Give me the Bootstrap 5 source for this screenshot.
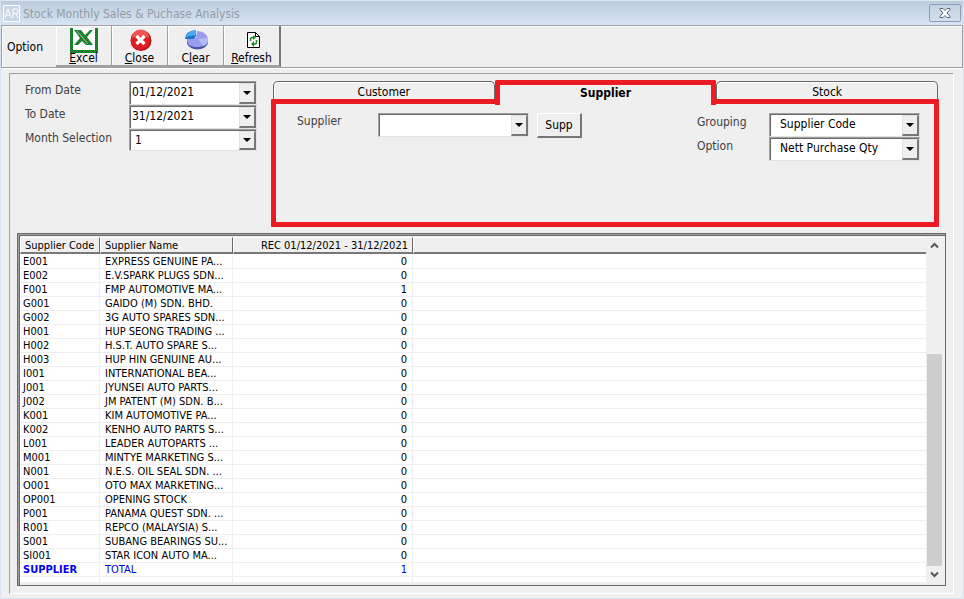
<!DOCTYPE html>
<html lang="en">
<head>
<meta charset="utf-8">
<meta name="viewport" content="width=device-width, initial-scale=1">
<title>Stock Monthly Sales &amp; Puchase Analysis</title>
<link href="https://cdn.jsdelivr.net/npm/bootstrap@5.3.0/dist/css/bootstrap.min.css" rel="stylesheet">
<style>
body{font-family:"DejaVu Sans Condensed","DejaVu Sans",Tahoma,sans-serif;font-size:12px;line-height:16px;color:#000;background:#d9e4f1}
button,input,select{font:inherit;color:inherit}
.app-window{min-height:100vh;border:solid #d9e4f1;border-width:0 1px 1px}
.title-bar{height:25px;background:linear-gradient(#bccbdc,#d8e4f2);color:#929ba6;border-top:1px solid #dfe7f0;padding:0 2px}
.title-text{margin-left:3px;padding-top:2px}
.app-logo{width:17px;height:17px}
.close-box{width:32px;height:18px;border:1px solid #8f9cb9;border-radius:2px;background:linear-gradient(#c3d2e4,#d3dfec)}
.client-area{background:#efefef}
.tool-bar{height:43px;border:1px solid #a0a0a0;box-shadow:inset 1px 1px #fff,0 1px #fff}
.tool-label{width:54px;padding-left:5px}
.tool-btn{width:56px;height:41px;border:1px solid #a0a0a0;border-width:0 1px 2px 0;box-shadow:inset 1px 1px #fff;background:#efefef;line-height:14px;padding:1px 0 0}
.tool-btn:last-child{width:57px;border-right:2px solid #787878}
.tool-btn svg{width:28px;height:26px;flex:none;margin-bottom:-2px}
.etched{margin:5px 9px 4px 8px;border:1px solid #a0a0a0;border-right-color:#fff;border-bottom-color:#fff}
.filters{width:261px;padding:7px 14px 0 15px}
.field-row{height:24px}
.field-row label{color:#404040;margin-top:1px}
.combo{position:relative;height:24px;background:#fff;border:1px solid #a0a0a0;border-right-color:#e3e3e3;border-bottom-color:#e3e3e3;box-shadow:inset 1px 1px #696969;padding:2px 1px 1px 2px}
.combo-date{width:128px}
.combo-wide{width:151px}
.combo-short{height:22px}
.combo input,.combo select{width:100%;min-width:0;border:0;background:none;appearance:none;outline:0;padding:0 18px 2px 0}
.combo select{padding-left:3px}
.combo .indent{padding-left:8px}
.drop{position:absolute;right:0;top:1px;bottom:0;width:17px;padding:0;background:#efefef;border:1px solid #e3e3e3;border-right:2px solid #777;border-bottom:2px solid #777;pointer-events:none}
.drop::after{content:"";border:4px solid transparent;border-top-color:#000;border-bottom:0}
.tabs-col{padding:6px 14px 0 0}
.tab-strip{height:25px;padding:0 1px 0 2px}
.tab-item{flex:1 1 33%;height:18px;margin-top:1px;border:1px solid #696969;border-bottom:0;border-radius:5px 5px 0 0;background:#efefef;box-shadow:inset 1px 1px #fff;padding:2px 0 0}
.tab-item.current{height:25px;margin:0;border:5px solid #ed1c24;border-bottom:0;border-radius:2px 2px 0 0;font-weight:bold;position:relative;box-shadow:none;padding:0 0 5px}
.tab-page{height:128px;margin-top:-6px;border:5px solid #ed1c24;border-radius:1px;padding:9px 14px 0 21px}
.supplier-label{width:81px;color:#404040}
.choices{width:223px}
.supp-btn{width:45px;height:25px;border:1px solid #fff;border-right:2px solid #777;border-bottom:2px solid #777;background:#efefef}
.grid-box{margin:6px 7px 7px 7px;border:1px solid #696969;box-shadow:inset 1px 1px #a0a0a0,inset 2px 2px #696969;padding:3px 2px 2px 2px;background:#efefef}
.grid-data{font-size:11px;line-height:13px;table-layout:fixed;width:100%;border-collapse:separate;border-spacing:0;background:#fff}
.grid-data th{height:17px;font-weight:normal;background:#efefef;border:1px solid #fff;border-right-color:#696969;border-bottom:2px solid #777;padding:0 4px;white-space:nowrap}
.grid-data th:last-child{border-right:0}
.grid-data td{height:14px;padding:0 5px;border-right:1px solid #efefef;border-bottom:1px solid #efefef;white-space:nowrap;overflow:hidden}
.grid-data td:last-child{border-right:0}
.grid-data td:first-child{padding-left:3px}
.grid-data .first-row td{height:15px;padding-top:1px}
.grid-data .total-row{color:#0000f0}
.grid-data .tail td{height:6px}
.c-code{width:80px}.c-name{width:133px}.c-rec{width:180px}
.scroll-col{width:17px;background:#efefef;padding:0 1px}
.scroll-col button{height:17px;border:0;padding:0;background:#efefef;line-height:0}
.scroll-gap{flex:101 1 0}
.scroll-thumb{flex:213 1 0;background:#cdcdcd}
</style>
<script src="https://cdn.jsdelivr.net/npm/bootstrap@5.3.0/dist/js/bootstrap.bundle.min.js"></script>
</head>
<body>
<main class="app-window d-flex flex-column">
 <header class="title-bar d-flex align-items-center">
  <svg class="app-logo" viewBox="0 0 17 17"><path d="M.5.5h16v16H.5z" fill="#c9d6e5" stroke="#fff"/><path d="M2 13L5 4l3 9M3 10h4M10 13V4h3q2 0 2 2.300T13 8.500h-3m3 0l2 4.500" fill="none" stroke="#fff"/></svg>
  <span class="title-text flex-grow-1">Stock Monthly Sales &amp; Puchase Analysis</span>
  <button class="close-box p-0 d-flex align-items-center justify-content-center" aria-label="Close window"><svg width="12" height="10" viewBox="0 0 12 10"><path d="M1 .5h3l2 2 2-2h3v1L8 5l3 3.500v1H8l-2-2-2 2H1v-1L4 5 1 1.500z" fill="#fff" stroke="#59616f"/></svg></button>
 </header>
 <div class="client-area flex-grow-1 d-flex flex-column">
  <nav class="tool-bar d-flex">
   <span class="tool-label align-self-center">Option</span>
   <button class="tool-btn d-flex flex-column align-items-center"><svg viewBox="0 0 28 26"><defs><pattern id="dots" width="2" height="2" patternUnits="userSpaceOnUse"><path d="M0 0h2v2H0z" fill="#149b32"/><path d="M0 0h1v1H0zM1 1h1v1H1z" fill="#28602c"/></pattern></defs><path d="M0 1h28v25H0z" fill="url(#dots)"/><path d="M3 1h22v22H3z" fill="#fff"/><path d="M4 3h7l4 5 5-5h3l-6 7 6 8h-7l-4-4-4 4H4l6-7z" fill="url(#dots)"/><path d="M7 4l11 13" stroke="#a9c6ad"/></svg><span><u>E</u>xcel</span></button>
   <button class="tool-btn d-flex flex-column align-items-center"><svg viewBox="0 0 28 26"><circle cx="15" cy="13.500" r="10.500" fill="#ab1017"/><circle cx="14.500" cy="13" r="9.800" fill="#df1c23"/><path d="M6 11a8.500 8.500 0 0 1 17 0q-8-4-17 0z" fill="#ee5555"/><path d="M10.500 9l8 8m0-8l-8 8" stroke="#fff" stroke-width="3.200"/></svg><span><u>C</u>lose</span></button>
   <button class="tool-btn d-flex flex-column align-items-center"><svg viewBox="0 0 28 26"><path d="M5 13v3c2 8 18 9 21 0v-4z" fill="#4b55a5"/><path d="M15 4c7 0 11 4 11 9s-5 7-11 7S5 18 5 12l9-1z" fill="#9a9df0"/><path d="M16 12l10-1q1 6-5 8z" fill="#b7baf9"/><path d="M14 3v6l-2 3H3q0-8 11-9z" fill="#1979c8"/><path d="M14 3v5L4 10q1-6 10-7z" fill="#49aaf2"/></svg><span>C<u>l</u>ear</span></button>
   <button class="tool-btn d-flex flex-column align-items-center"><svg viewBox="0 0 28 26"><path d="M9.500 5.500h8l4 4v11h-12z" fill="#fff" stroke="#000"/><path d="M17.500 5.500v4h4" fill="none" stroke="#000"/><path d="M12.500 14v-1.500q0-2 2-2h1m3 2.500v2q0 2-2 2h-1" fill="none" stroke="#168b22" stroke-width="1.500"/><path d="M15 8l3 2.500-3 2.500zM16 14v6l-3-3z" fill="#168b22"/></svg><span><u>R</u>efresh</span></button>
  </nav>
  <section class="etched flex-grow-1 d-flex flex-column">
   <div class="d-flex">
    <form class="filters flex-shrink-0">
     <div class="field-row d-flex justify-content-between"><label for="from">From Date</label><div class="combo combo-date"><input id="from" value="01/12/2021"><span class="drop d-flex align-items-center justify-content-center"></span></div></div>
     <div class="field-row d-flex justify-content-between"><label for="to">To Date</label><div class="combo combo-date"><input id="to" value="31/12/2021"><span class="drop d-flex align-items-center justify-content-center"></span></div></div>
     <div class="field-row d-flex justify-content-between"><label for="month">Month Selection</label><div class="combo combo-date combo-short"><select id="month"><option>1</option></select><span class="drop d-flex align-items-center justify-content-center"></span></div></div>
    </form>
    <div class="tabs-col flex-grow-1">
     <div class="tab-strip d-flex">
      <button class="tab-item">Customer</button><button class="tab-item current">Supplier</button><button class="tab-item">Stock</button>
     </div>
     <div class="tab-page">
      <div class="d-flex align-items-start">
       <label for="supplier" class="supplier-label">Supplier</label>
       <div class="combo combo-wide"><input id="supplier"><span class="drop d-flex align-items-center justify-content-center"></span></div>
       <button class="supp-btn ms-2 p-0">Supp</button>
       <div class="choices ms-auto">
        <div class="field-row d-flex justify-content-between"><label for="grouping">Grouping</label><div class="combo combo-wide"><select class="indent" id="grouping"><option>Supplier Code</option></select><span class="drop d-flex align-items-center justify-content-center"></span></div></div>
        <div class="field-row d-flex justify-content-between"><label for="option">Option</label><div class="combo combo-wide"><select class="indent" id="option"><option>Nett Purchase Qty</option></select><span class="drop d-flex align-items-center justify-content-center"></span></div></div>
       </div>
      </div>
     </div>
    </div>
   </div>
   <div class="grid-box flex-grow-1 d-flex">
    <div class="flex-grow-1 bg-white">
     <table class="grid-data">
      <colgroup><col class="c-code"><col class="c-name"><col class="c-rec"><col></colgroup>
      <thead><tr><th>Supplier Code</th><th>Supplier Name</th><th class="text-end">REC 01/12/2021 - 31/12/2021</th><th></th></tr></thead>
      <tbody>
       <tr class="first-row"><td>E001</td><td>EXPRESS GENUINE PA...</td><td class="text-end">0</td><td></td></tr>
       <tr><td>E002</td><td>E.V.SPARK PLUGS SDN...</td><td class="text-end">0</td><td></td></tr>
       <tr><td>F001</td><td>FMP AUTOMOTIVE MA...</td><td class="text-end">1</td><td></td></tr>
       <tr><td>G001</td><td>GAIDO (M) SDN. BHD.</td><td class="text-end">0</td><td></td></tr>
       <tr><td>G002</td><td>3G AUTO SPARES SDN...</td><td class="text-end">0</td><td></td></tr>
       <tr><td>H001</td><td>HUP SEONG TRADING ...</td><td class="text-end">0</td><td></td></tr>
       <tr><td>H002</td><td>H.S.T. AUTO SPARE S...</td><td class="text-end">0</td><td></td></tr>
       <tr><td>H003</td><td>HUP HIN GENUINE AU...</td><td class="text-end">0</td><td></td></tr>
       <tr><td>I001</td><td>INTERNATIONAL BEA...</td><td class="text-end">0</td><td></td></tr>
       <tr><td>J001</td><td>JYUNSEI AUTO PARTS...</td><td class="text-end">0</td><td></td></tr>
       <tr><td>J002</td><td>JM PATENT (M) SDN. B...</td><td class="text-end">0</td><td></td></tr>
       <tr><td>K001</td><td>KIM AUTOMOTIVE PA...</td><td class="text-end">0</td><td></td></tr>
       <tr><td>K002</td><td>KENHO AUTO PARTS S...</td><td class="text-end">0</td><td></td></tr>
       <tr><td>L001</td><td>LEADER AUTOPARTS ...</td><td class="text-end">0</td><td></td></tr>
       <tr><td>M001</td><td>MINTYE MARKETING S...</td><td class="text-end">0</td><td></td></tr>
       <tr><td>N001</td><td>N.E.S. OIL SEAL SDN. ...</td><td class="text-end">0</td><td></td></tr>
       <tr><td>O001</td><td>OTO MAX MARKETING...</td><td class="text-end">0</td><td></td></tr>
       <tr><td>OP001</td><td>OPENING STOCK</td><td class="text-end">0</td><td></td></tr>
       <tr><td>P001</td><td>PANAMA QUEST SDN. ...</td><td class="text-end">0</td><td></td></tr>
       <tr><td>R001</td><td>REPCO (MALAYSIA) S...</td><td class="text-end">0</td><td></td></tr>
       <tr><td>S001</td><td>SUBANG BEARINGS SU...</td><td class="text-end">0</td><td></td></tr>
       <tr><td>SI001</td><td>STAR ICON AUTO MA...</td><td class="text-end">0</td><td></td></tr>
       <tr class="total-row"><td class="fw-bold">SUPPLIER</td><td>TOTAL</td><td class="text-end">1</td><td></td></tr>
       <tr class="tail"><td></td><td></td><td></td><td></td></tr>
      </tbody>
     </table>
    </div>
    <div class="scroll-col d-flex flex-column flex-shrink-0">
     <button aria-label="Scroll up"><svg width="9" height="7" viewBox="0 0 9 7"><path d="M1 5.500l3.500-3.500L8 5.500" fill="none" stroke="#555" stroke-width="2"/></svg></button>
     <div class="scroll-gap"></div><div class="scroll-thumb"></div>
     <button aria-label="Scroll down"><svg width="9" height="7" viewBox="0 0 9 7"><path d="M1 1.500L4.500 5 8 1.500" fill="none" stroke="#555" stroke-width="2"/></svg></button>
    </div>
   </div>
  </section>
 </div>
</main>
</body>
</html>
